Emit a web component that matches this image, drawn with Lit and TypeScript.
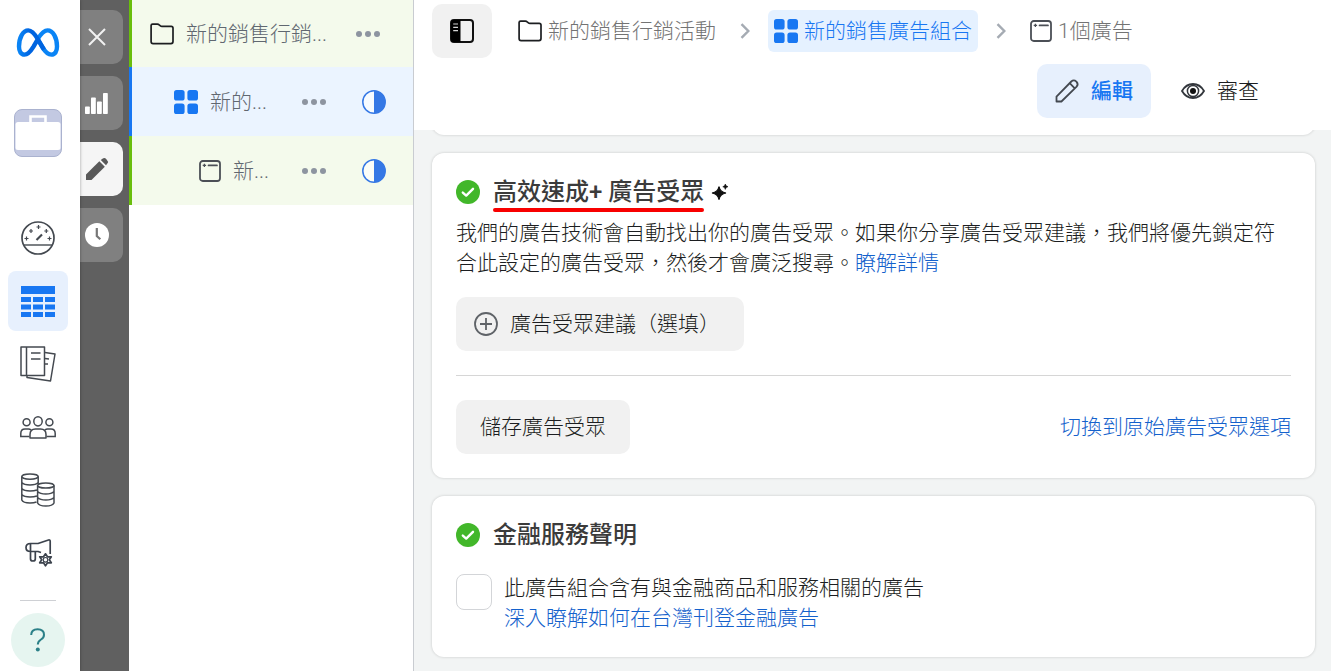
import { LitElement, html, css, svg } from "lit";
import { customElement } from "lit/decorators.js";
import { classMap } from "lit/directives/class-map.js";

const icon = (w: number, h: number, body: unknown) =>
  html`<svg width=${w} height=${h} viewBox="0 0 ${w} ${h}" fill="none" aria-hidden="true">${body}</svg>`;

const folder = () =>
  icon(24, 22, svg`<path d="M1.1 18.5V2.6Q1.1 1.1 2.6 1.1H7.4Q8.4 1.1 9.2 1.9L10.4 2.8Q11 3.3 12 3.3H21.2Q23 3.3 23 5V18.6Q23 20.6 21 20.6H3.1Q1.1 20.6 1.1 18.5Z" stroke="#1c1e21" stroke-width="1.7"/>`);

const grid = () =>
  icon(24, 24, svg`<g fill="#1877f2"><rect width="10.6" height="10.6" rx="2.6"/><rect x="13.4" width="10.6" height="10.6" rx="2.6"/><rect y="13.4" width="10.6" height="10.6" rx="2.6"/><rect x="13.4" y="13.4" width="10.6" height="10.6" rx="2.6"/></g>`);

const adFrame = () =>
  icon(22, 22, svg`<rect x="1" y="1" width="20" height="20" rx="2.8" stroke="#4b4f56" stroke-width="1.8"/><path d="M9.5 5.4H18" stroke="#4b4f56" stroke-width="1.7" stroke-linecap="round"/><path d="M5.4 3.7v3.4M3.7 5.4h3.4" stroke="#4b4f56" stroke-width="1.3"/>`);

const dots = () =>
  icon(24, 6, svg`<g fill="#8d94a0"><circle cx="3" cy="3" r="3"/><circle cx="12" cy="3" r="3"/><circle cx="21" cy="3" r="3"/></g>`);

const halfMoon = () =>
  icon(24, 24, svg`<circle cx="12" cy="12" r="11.2" fill="#fff" fill-opacity=".6" stroke="#3578e5" stroke-width="1.5"/><path d="M12 0.8a11.2 11.2 0 0 1 0 22.4Z" fill="#3578e5"/>`);

const chevron = () =>
  icon(10, 16, svg`<path d="M1.5 1.2L8.3 8L1.5 14.8" stroke="#a5abb3" stroke-width="2.4"/>`);

const check = () =>
  icon(24, 24, svg`<circle cx="12" cy="12" r="12" fill="#42b72a"/><path d="M6.8 12.600L10.200 15.600L17 8.800" stroke="#fff" stroke-width="2.4" stroke-linecap="round" stroke-linejoin="round"/>`);

const metaLogo = () =>
  icon(44, 30, svg`<defs><linearGradient id="m1" x1="0" x2="1"><stop offset="0" stop-color="#0a84f5"/><stop offset=".45" stop-color="#0064e0"/><stop offset="1" stop-color="#0064e0"/></linearGradient></defs>
  <path d="M22 10.5C25.5 5.2 28 2.4 31.5 2.4C37 2.4 41 9.500 41 18.600C41 23.500 39 26.600 35.400 26.600C31.500 26.600 29 23.500 26.200 18.800L22 11.500" stroke="#0a84f5" stroke-width="4.400"/>
  <path d="M28 21.600L22 11.500C18.500 5.500 16 2.400 12.300 2.400C7 2.400 3 9.500 3 18.600C3 23.500 5 26.600 8.500 26.600C12 26.600 14.500 23.500 17.500 18.600L22 10.800" stroke="url(#m1)" stroke-width="4.400"/>`);

const briefcase = () =>
  icon(48, 48, svg`<rect x=".5" y=".5" width="47" height="47" rx="7.500" fill="#c3c9e2" stroke="#aab2cf"/><path d="M1.500 15.500Q1.500 13 4 13H44Q46.500 13 46.500 15.500V38.500Q46.500 41 44 41H4Q1.500 41 1.500 38.500Z" fill="#fff"/><path d="M16.500 13V7.500H31.500V13" stroke="#fff" stroke-width="2.600"/>`);

const gauge = () =>
  icon(34, 34, svg`<g stroke="#444950"><circle cx="17" cy="17" r="16" stroke-width="1.700"/><path d="M2.800 24H31.200" stroke-width="1.400"/><path d="M15.500 19L21 13.500" stroke-width="2.200"/><g stroke-width="1.200"><path d="M17.500 4v4M15.500 6h4M10 8v4M8 10h4M25.300 8v4M23.300 10h4M5.500 15.500v4M3.500 17.500h4M28.500 15.500v4M26.500 17.500h4"/></g></g>`);

const table = () =>
  icon(34, 31, svg`<g fill="#1877f2"><path d="M0 0H34V8H0Z"/><path d="M0 11H10V16H0ZM12 11H22V16H12ZM24 11H34V16H24ZM0 18.500H10V23.500H0ZM12 18.500H22V23.500H12ZM24 18.500H34V23.500H24ZM0 26H10V31H0ZM12 26H22V31H12ZM24 26H34V31H24Z"/></g>`);

const pages = () =>
  icon(36, 36, svg`<g stroke="#444950" stroke-width="1.500" stroke-linejoin="round"><path d="M1 1H24.500V29.500H1ZM6.500 1V29.500M11 7H20.500M11 13H20.500"/><path d="M25 6.500L35 8L30.500 35L7 31.500V30M25 12.500L29 13M25 18H28"/></g>`);

const people = () =>
  icon(36, 23, svg`<g stroke="#444950" stroke-width="1.500"><ellipse cx="18" cy="5.300" rx="4.200" ry="4.600"/><circle cx="6.600" cy="6.200" r="3.500"/><circle cx="29.400" cy="6.200" r="3.500"/><path d="M10 22V18.500Q10 13 15.500 13H20.500Q26 13 26 18.500V22Z" stroke-linejoin="round"/><path d="M9.500 20.500H.8V17.500Q.8 13 5 13H8.500Q10 13 11 14M26.500 20.500H35.200V17.500Q35.200 13 31 13H27.500Q26 13 25 14"/></g>`);

const coins = () =>
  icon(34, 34, svg`<g stroke="#444950" stroke-width="1.500"><ellipse cx="9" cy="3.600" rx="8.200" ry="2.600"/><path d="M.8 3.600V27Q2 30 9 30Q13 30 15.500 29M17.200 3.600V11M.8 9.500Q3 12 9 12Q15 12 17.200 9.500M.8 15.500Q3 18 9 18Q13 18 16 17M.8 21.500Q3 24 9 24Q13 24 16 23"/><ellipse cx="24.800" cy="12.500" rx="8.200" ry="2.600"/><path d="M16.600 12.500V30Q18 33 24.800 33Q31.600 33 33 30V12.500M16.600 18.500Q19 21 24.800 21Q30.600 21 33 18.500M16.600 24.500Q19 27 24.800 27Q30.600 27 33 24.500"/></g>`);

const megaphone = () =>
  icon(27, 28, svg`<g stroke="#3c434d" stroke-width="1.700" stroke-linejoin="round"><path d="M5.500 4.500H13L23.500 1Q25.200.6 25.200 2.500V15M16 13.500L13 12.500H5.500M5.500 4.500Q1 4.500 1 8.500Q1 12.500 5.500 12.500ZM5.500 4.500V12.500M5.500 13V20Q5.500 22 8 22Q10.300 22 10.300 20V13"/><path d="M20.500 14.800L22.500 17.800H26.300L24.300 20.800L26.300 23.800H22.500L20.500 26.800L18.500 23.800H14.700L16.700 20.800L14.700 17.800H18.500Z"/><circle cx="20.500" cy="20.800" r="2.300" stroke-width="1.200"/></g>`);

const question = () =>
  icon(16, 24, svg`<path d="M1.200 7Q1.200 1.200 7.600 1.200Q14 1.200 14 6.700Q14 9.600 11 11.500Q7.800 13.500 7.800 16.500" stroke="#2c8088" stroke-width="2"/><circle cx="7.800" cy="21.500" r="2" fill="#2c8088"/>`);

const close = () => icon(18, 18, svg`<path d="M1 1L17 17M17 1L1 17" stroke="#f2f2f2" stroke-width="2"/>`);
const bars = () =>
  icon(23, 22, svg`<g fill="#fff"><rect y="14.500" width="4.800" height="7.500" rx=".8"/><rect x="6" y="5.500" width="4.800" height="16.500" rx=".8"/><rect x="12" y="9.500" width="4.800" height="12.500" rx=".8"/><rect x="18" y="1" width="4.800" height="21" rx=".8"/></g>`);
const pencilSolid = () =>
  icon(24, 24, svg`<g fill="#595959"><path d="M1 23V17.500L14.300 4.200L19.800 9.700L6.500 23Z"/><path d="M15.800 3L17.800 1.500Q19.600 0.300 21.600 2.400Q23.700 4.500 22.500 6.200L21 8.200Z"/></g>`);
const clock = () =>
  icon(24, 24, svg`<circle cx="12" cy="12" r="12" fill="#fff"/><path d="M11.800 5V13L15.300 16.300" stroke="#777" stroke-width="2.200"/>`);

const panel = () =>
  icon(24, 24, svg`<rect x="1" y="1" width="22" height="22" rx="3" stroke="#111" stroke-width="2"/><path d="M3 1H10.500V23H3Q1 23 1 21V3Q1 1 3 1Z" fill="#000"/><path d="M3.200 5H8M3.200 8.300H8M3.200 11.600H8" stroke="#d5d5d5" stroke-width="1.200"/>`);
const pencil = () =>
  icon(24, 24, svg`<path d="M1.500 22.500V17.600L16.300 2.500Q18.800.3 21.400 2.600Q23.800 5.200 21.600 7.700L6.400 22.500ZM14.700 4.200L19.800 9.300" stroke="#444950" stroke-width="1.800" stroke-linejoin="round"/>`);
const eye = () =>
  icon(24, 16, svg`<path d="M1 8Q5 1 12 1Q19 1 23 8Q19 15 12 15Q5 15 1 8Z" stroke="#33373d" stroke-width="1.800"/><circle cx="12" cy="8" r="5.600" stroke="#33373d" stroke-width="1.500"/><circle cx="12" cy="8" r="3" fill="#111"/>`);
const sparkle = () =>
  icon(16, 16, svg`<path d="M7 2.500Q8 8 14 9Q8 10 7 15.700Q6 10 0 9Q6 8 7 2.500Z" fill="#111" stroke="#111" stroke-width="1.200"/><path d="M13.300 0Q13.600 2.300 16 2.700Q13.600 3.100 13.300 5.400Q13 3.100 10.800 2.700Q13 2.300 13.300 0Z" fill="#111" stroke="#111" stroke-width=".6"/>`);
const plusCircle = () =>
  icon(24, 24, svg`<circle cx="12" cy="12" r="11" stroke="#5f6368" stroke-width="1.800"/><path d="M12 6V18M6 12H18" stroke="#5f6368" stroke-width="1.800"/>`);

const shared = css`
  :host, * { box-sizing: border-box; }
  svg { display: block; flex: none; overflow: visible; }
  button {
    border: 0; padding: 0; margin: 0; background: none; font: inherit; color: inherit;
    display: flex; align-items: center; justify-content: center; cursor: pointer;
  }
  a { color: #1461cc; text-decoration: none; }
`;

@customElement("side-nav")
export class SideNav extends LitElement {
  static styles = [shared, css`
    :host { display: block; width: 80px; flex: none; background: #fff; box-shadow: 0 0 3px rgba(0, 0, 0, .35); z-index: 1; }
    nav { display: flex; flex-direction: column; align-items: center; padding-right: 4px; }
    .logo { padding: 28px 0 51px; }
    .business { margin-bottom: 51px; }
    .tools { display: flex; flex-direction: column; gap: 3px; }
    .tool { width: 60px; height: 60px; border-radius: 8px; }
    .tool.on { background: #e7f0fd; }
    .rule { width: 36px; height: 1px; background: #ced0d4; margin: 17px 0 12px; }
    .help { width: 54px; height: 54px; border-radius: 50%; background: #e6f5f0; }
  `];
  tools = [
    { label: "帳號總覽", art: gauge, on: false },
    { label: "行銷活動", art: table, on: true },
    { label: "廣告報告", art: pages, on: false },
    { label: "廣告受眾", art: people, on: false },
    { label: "帳單", art: coins, on: false },
    { label: "廣告設定", art: megaphone, on: false },
  ];
  render() {
    return html`<nav>
      <a class="logo" href="#" aria-label="Meta">${metaLogo()}</a>
      <button class="business" aria-label="商家">${briefcase()}</button>
      <div class="tools">
        ${this.tools.map((t) => html`<button class=${classMap({ tool: true, on: t.on })} aria-label=${t.label}>${t.art()}</button>`)}
      </div>
      <div class="rule"></div>
      <button class="help" aria-label="說明">${question()}</button>
    </nav>`;
  }
}

@customElement("mode-strip")
export class ModeStrip extends LitElement {
  static styles = [shared, css`
    :host { display: flex; flex-direction: column; gap: 12px; width: 49px; flex: none; padding: 10px 6px 0 0; background: #606060; }
    .mode { height: 54px; border-radius: 0 10px 10px 0; background: #808080; padding-right: 10px; }
    .mode.on { background: #f5f5f5; }
  `];
  render() {
    return html`
      <button class="mode" aria-label="關閉">${close()}</button>
      <button class="mode" aria-label="圖表">${bars()}</button>
      <button class="mode on" aria-label="編輯">${pencilSolid()}</button>
      <button class="mode" aria-label="記錄">${clock()}</button>`;
  }
}

@customElement("campaign-tree")
export class CampaignTree extends LitElement {
  static styles = [shared, css`
    :host { display: block; width: 285px; flex: none; background: #fff; border-right: 1px solid #c9ccd1; }
    .row { display: flex; align-items: center; height: 69px; border-left: 3px solid #69be0c; background: #f4faec; color: #606770; padding-right: 27px; }
    .row.top { height: 67px; padding: 0 33px 0 18px; }
    .row.set { border-color: #1877f2; background: #ebf4ff; padding-left: 42px; }
    .row.ad { padding-left: 67px; }
    .name { flex: 1; min-width: 0; margin-left: 12px; white-space: nowrap; }
    .state { margin-left: 36px; }
  `];
  render() {
    return html`
      <div class="row top">${folder()}<span class="name">新的銷售行銷...</span><button aria-label="更多">${dots()}</button></div>
      <div class="row set">${grid()}<span class="name">新的...</span><button aria-label="更多">${dots()}</button><span class="state">${halfMoon()}</span></div>
      <div class="row ad">${adFrame()}<span class="name">新...</span><button aria-label="更多">${dots()}</button><span class="state">${halfMoon()}</span></div>`;
  }
}

@customElement("editor-header")
export class EditorHeader extends LitElement {
  static styles = [shared, css`
    :host { display: block; background: #fff; padding: 4px 18px 12px; }
    .path { display: flex; align-items: center; height: 54px; }
    .panel { width: 60px; height: 54px; border-radius: 10px; background: #f1f1f1; margin-right: 20px; }
    .crumb { display: flex; align-items: center; gap: 6px; height: 42px; padding: 0 6px; border-radius: 6px; color: #737373; white-space: nowrap; }
    .crumb.on { background: #e5f1ff; color: #1877f2; }
    .sep { padding: 0 18px; }
    .tabs { display: flex; justify-content: flex-end; gap: 12px; padding: 6px 36px 0 0; }
    .tab { height: 54px; padding: 0 18px; gap: 12px; border-radius: 10px; color: #1c1e21; }
    .tab.on { background: #e7f0fd; color: #1877f2; font-weight: 500; }
  `];
  render() {
    return html`
      <div class="path">
        <button class="panel" aria-label="切換面板">${panel()}</button>
        <a class="crumb" href="#">${folder()}新的銷售行銷活動</a>
        <span class="sep">${chevron()}</span>
        <a class="crumb on" href="#">${grid()}新的銷售廣告組合</a>
        <span class="sep">${chevron()}</span>
        <a class="crumb" href="#">${adFrame()}1個廣告</a>
      </div>
      <div class="tabs">
        <button class="tab on">${pencil()}編輯</button>
        <button class="tab">${eye()}審查</button>
      </div>`;
  }
}

@customElement("audience-cards")
export class AudienceCards extends LitElement {
  static styles = [shared, css`
    :host { display: flex; flex-direction: column; gap: 18px; flex: 1; min-height: 0; overflow: hidden; padding: 0 16px 0 18px; background: #f2f4f4; }
    .card { flex: none; background: #fff; border-radius: 12px; padding: 24px; box-shadow: 0 0 3px rgba(0, 0, 0, .18); }
    .card.past { height: 48px; margin-top: -43px; }
    .head { display: flex; align-items: center; height: 30px; }
    h2 { position: relative; margin: 0 8px 0 13px; font-size: 24px; line-height: 30px; font-weight: 500; color: #3b3b3b; white-space: nowrap; }
    .marked::after { content: ""; position: absolute; left: 0; right: 0; top: 31px; height: 4px; border-radius: 2px; background: #f80000; }
    p { margin: 11px 0 19px; }
    .grey { height: 54px; padding: 0 24px; border-radius: 10px; background: #f1f1f1; white-space: nowrap; }
    .suggest { padding-left: 18px; gap: 12px; }
    .foot { display: flex; align-items: center; justify-content: space-between; margin-top: 24px; padding-top: 24px; border-top: 1px solid #d6d6d6; }
    .agree { display: flex; gap: 12px; margin-top: 23px; }
    input { appearance: none; flex: none; width: 36px; height: 36px; margin: 1px 0 0; border: 1px solid #d3d5d8; border-radius: 8px; background: #fff; }
    .lines { display: flex; flex-direction: column; align-items: flex-start; }
  `];
  render() {
    return html`
      <section class="card past"></section>
      <section class="card">
        <div class="head">${check()}<h2 class="marked">高效速成+ 廣告受眾</h2>${sparkle()}</div>
        <p>我們的廣告技術會自動找出你的廣告受眾。如果你分享廣告受眾建議，我們將優先鎖定符合此設定的廣告受眾，然後才會廣泛搜尋。<a href="#">瞭解詳情</a></p>
        <button class="grey suggest">${plusCircle()}廣告受眾建議（選填）</button>
        <div class="foot"><button class="grey">儲存廣告受眾</button><a href="#">切換到原始廣告受眾選項</a></div>
      </section>
      <section class="card">
        <div class="head">${check()}<h2>金融服務聲明</h2></div>
        <div class="agree">
          <input type="checkbox" id="finance" />
          <div class="lines">
            <label for="finance">此廣告組合含有與金融商品和服務相關的廣告</label>
            <a href="#">深入瞭解如何在台灣刊登金融廣告</a>
          </div>
        </div>
      </section>`;
  }
}

@customElement("app-root")
export class AppRoot extends LitElement {
  static styles = css`
    :host {
      display: flex; height: 100vh; overflow: hidden; color: #1c1e21;
      font: 300 21px/30px Roboto, "Noto Sans CJK TC", sans-serif;
    }
    main { flex: 1; min-width: 0; display: flex; flex-direction: column; }
  `;
  connectedCallback() {
    super.connectedCallback();
    this.lang = "zh-Hant";
  }
  render() {
    return html`
      <side-nav></side-nav>
      <mode-strip></mode-strip>
      <campaign-tree></campaign-tree>
      <main>
        <editor-header></editor-header>
        <audience-cards></audience-cards>
      </main>`;
  }
}
